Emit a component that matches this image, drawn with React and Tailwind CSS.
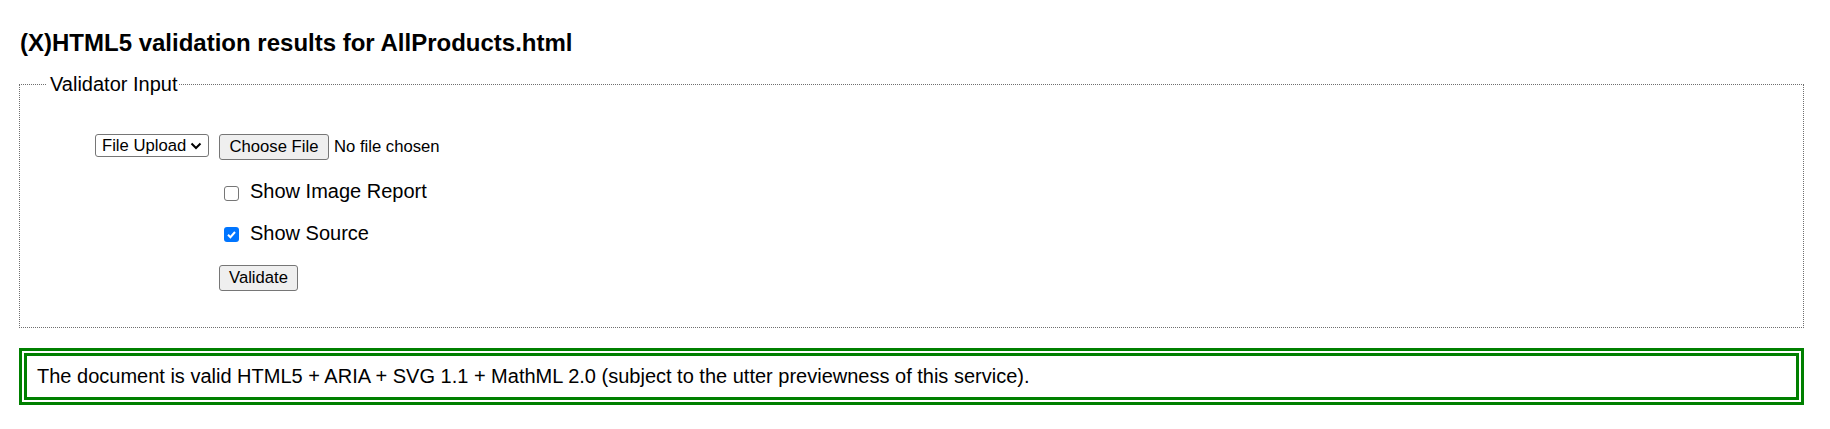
export default function App() {
  return (
    <div
      className="w-[1830px] h-[429px] bg-white text-black pt-[29px] pl-[19px] pr-[26px]"
      style={{ fontFamily: '"Liberation Sans", Arial, sans-serif' }}
    >
      <h2 className="text-[24px] leading-[28px] font-bold ml-[1px]">
        (X)HTML5 validation results for AllProducts.html
      </h2>

      <fieldset className="mt-[16px] border border-dotted border-[#6f6f6f] pl-[26px] pr-[10px] pb-[36px]">
        <legend className="pl-[4px] pr-[1px] text-[20px] leading-[23px]">Validator Input</legend>

        <div className="ml-[49px] pt-[38px] grid grid-cols-[124px_1fr]">
          {/* Row 1 */}
          <div>
            <div className="w-[114px] h-[23px] border border-[#767676] rounded-[3px] bg-white flex items-center pl-[6px] pr-[4px] text-[16.67px] leading-[20px]">
              <span>File Upload</span>
              <svg className="ml-auto mr-[2px]" width="12" height="8" viewBox="0 0 12 8">
                <path d="M1.5 1.5 L6 6 L10.5 1.5" fill="none" stroke="#000" strokeWidth="2" />
              </svg>
            </div>
          </div>
          <div className="flex items-center h-[26px]">
            <div className="w-[110px] h-[26px] bg-[#efefef] border border-[#767676] rounded-[3px] flex items-center justify-center text-[16.67px] leading-[20px]">
              Choose File
            </div>
            <span className="ml-[5px] text-[16.67px] leading-[20px]">No file chosen</span>
          </div>

          {/* Row 2 */}
          <div />
          <div className="mt-[20px] flex items-start text-[20px] leading-[23px]">
            <div className="ml-[5px] mt-[6px] w-[15px] h-[15px] border border-[#767676] rounded-[3px] bg-white" />
            <span className="ml-[11px]">Show Image Report</span>
          </div>

          {/* Row 3 */}
          <div />
          <div className="mt-[19px] flex items-start text-[20px] leading-[23px]">
            <div className="ml-[5px] mt-[5px] w-[15px] h-[15px] rounded-[3px] bg-[#0075ff] flex items-center justify-center">
              <svg width="11" height="11" viewBox="0 0 11 11">
                <path d="M2 5.8 L4.4 8.2 L9 3" fill="none" stroke="#fff" strokeWidth="2" />
              </svg>
            </div>
            <span className="ml-[11px]">Show Source</span>
          </div>

          {/* Row 4 */}
          <div />
          <div className="mt-[20px]">
            <div className="w-[79px] h-[26px] bg-[#efefef] border border-[#767676] rounded-[3px] flex items-center justify-center text-[16.67px] leading-[20px]">
              Validate
            </div>
          </div>
        </div>
      </fieldset>

      <div className="mt-[20px] border-[8px] border-double border-[#008000] pl-[10px] py-[9px] text-[20px] leading-[23px]">
        The document is valid HTML5 + ARIA + SVG 1.1 + MathML 2.0 (subject to the utter previewness of this service).
      </div>
    </div>
  );
}
